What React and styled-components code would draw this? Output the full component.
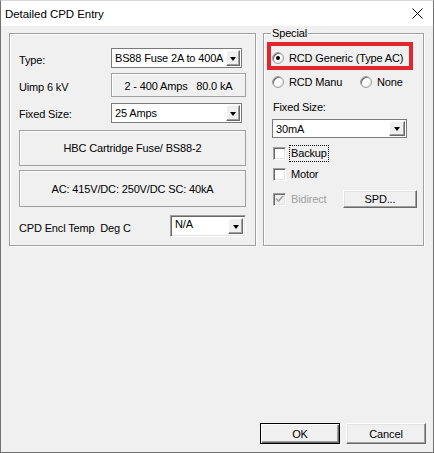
import React from "react";
import styled, { createGlobalStyle, css } from "styled-components";

const GlobalStyle = createGlobalStyle`
  html, body {
    margin: 0;
    padding: 0;
    background: #fff;
  }
  body {
    font-family: "Liberation Sans", Arial, sans-serif;
    font-size: 11px;
    letter-spacing: -0.15px;
    color: #000;
  }
  * { box-sizing: border-box; }
`;

const Window = styled.div`
  width: 434px;
  height: 453px;
  display: flex;
  flex-direction: column;
  background: #f0f0f0;
  border: 1px solid #707070;
  border-top-color: #d8d8d8;
`;

const TitleBar = styled.div`
  height: 25px;
  flex: none;
  background: #fff;
  display: flex;
  align-items: center;
  justify-content: space-between;
  padding: 0 10px 0 4px;
`;

const Title = styled.span`
  font-size: 11.5px;
  letter-spacing: -0.05px;
`;

const Body = styled.div`
  flex: 1;
  display: flex;
  flex-direction: column;
  padding: 7px 9px 8px 8px;
`;

const Groups = styled.div`
  display: flex;
  align-items: flex-start;
  gap: 7px;
`;

const GroupBox = styled.div`
  position: relative;
  width: ${p => p.w}px;
  height: 213px;
  padding: ${p => p.pad};
  border: 1px solid #a0a0a0;
  box-shadow: inset 1px 1px 0 #fff, 1px 1px 0 #fff;
  display: flex;
  flex-direction: column;
`;

const Legend = styled.span`
  position: absolute;
  top: -7px;
  left: 7px;
  padding: 0 1px;
  line-height: 13px;
  background: #f0f0f0;
`;

const Row = styled.div`
  display: flex;
  align-items: center;
  height: ${p => p.h}px;
  margin-top: ${p => p.mt || 0}px;
  margin-left: ${p => p.ml || 0}px;
`;

const Label = styled.span`
  width: ${p => (p.w ? `${p.w}px` : "auto")};
  flex: none;
  padding-top: ${p => p.dy || 0}px;
  white-space: pre;
`;

const Combo = styled.div`
  width: ${p => p.w}px;
  height: ${p => p.h}px;
  display: flex;
  align-items: ${p => (p.sunken ? "flex-start" : "center")};
  background: #fff;
  padding: 1px;
  ${p =>
    p.sunken
      ? css`
          border: 1px solid;
          border-color: #a0a0a0 #fff #fff #a0a0a0;
          box-shadow: inset 1px 1px 0 #696969, inset -1px -1px 0 #e3e3e3;
          padding: 2px;
        `
      : css`
          border: 1px solid #7a7a7a;
        `}
`;

const ComboText = styled.span`
  flex: 1;
  padding-left: 2px;
  white-space: nowrap;
  overflow: hidden;
`;

const DropButton = styled.span`
  width: ${p => p.w || 14}px;
  align-self: stretch;
  flex: none;
  background: #f0f0f0;
  border: 1px solid;
  border-color: #fff #696969 #696969 #fff;
  box-shadow: inset -1px -1px 0 #a0a0a0;
  display: flex;
  align-items: center;
  justify-content: center;

  &::after {
    content: "";
    display: block;
    margin-top: 1px;
    border-left: 3.5px solid transparent;
    border-right: 3.5px solid transparent;
    border-top: 4px solid #000;
  }
`;

const StaticBox = styled.div`
  width: ${p => p.w}px;
  height: ${p => p.h}px;
  margin-top: ${p => p.mt || 0}px;
  flex: none;
  display: flex;
  align-items: center;
  justify-content: center;
  padding-top: ${p => p.dy || 0}px;
  border: 1px solid #a0a0a0;
  box-shadow: inset 1px 1px 0 #fff;
  white-space: pre;
`;

const Highlight = styled.div`
  width: 146px;
  height: 28px;
  margin-left: -5px;
  border: 4px solid #e3262e;
  padding: 3px 0 0 1px;
  display: flex;
  align-items: center;
`;

const Option = styled.label`
  display: flex;
  align-items: center;
  width: ${p => (p.w ? `${p.w}px` : "auto")};
  color: ${p => (p.disabled ? "#a0a0a0" : "#000")};
`;

const RadioDot = styled.span`
  width: 12px;
  height: 12px;
  flex: none;
  margin-right: 5px;
  border-radius: 50%;
  background: #fff;
  border: 1px solid #a0a0a0;
  box-shadow: inset 1px 1px 0 #696969, inset -1px -1px 0 #e3e3e3;
  display: flex;
  align-items: center;
  justify-content: center;

  &::after {
    content: "";
    width: 4px;
    height: 4px;
    border-radius: 50%;
    background: ${p => (p.checked ? "#000" : "transparent")};
  }
`;

const CheckBox = styled.span`
  width: 13px;
  height: 13px;
  flex: none;
  margin: 0 5px 0 1px;
  background: ${p => (p.disabled ? "#f0f0f0" : "#fff")};
  border: 1px solid;
  border-color: #a0a0a0 #fff #fff #a0a0a0;
  box-shadow: inset 1px 1px 0 #696969, inset -1px -1px 0 #e3e3e3;
  display: flex;
  align-items: center;
  justify-content: center;
`;

const FocusText = styled.span`
  padding: 1px 1px 2px;
  border: 1px dotted #000;
  margin-left: -2px;
`;

const PushButton = styled.button`
  width: ${p => p.w}px;
  height: ${p => p.h}px;
  flex: none;
  padding: 0;
  font: inherit;
  letter-spacing: inherit;
  color: #000;
  background: #f0f0f0;
  border: 1px solid;
  border-color: #fff #696969 #696969 #fff;
  box-shadow: inset -1px -1px 0 #a0a0a0, inset 1px 1px 0 #e3e3e3;
  ${p =>
    p.isDefault &&
    css`
      border-color: #000;
      box-shadow: inset 1px 1px 0 #fff, inset -1px -1px 0 #696969,
        inset -2px -2px 0 #a0a0a0;
    `}
`;

const ButtonRow = styled.div`
  margin-top: auto;
  margin-right: -2px;
  display: flex;
  justify-content: flex-end;
  gap: 6px;
`;

const Select = ({ w, h, value, sunken, btn }) => (
  <Combo w={w} h={h} sunken={sunken}>
    <ComboText>{value}</ComboText>
    <DropButton w={btn} />
  </Combo>
);

const Radio = ({ checked, w, children }) => (
  <Option w={w}>
    <RadioDot checked={checked} />
    {children}
  </Option>
);

const Check = ({ checked, disabled, w, children }) => (
  <Option w={w} disabled={disabled}>
    <CheckBox disabled={disabled}>
      {checked && (
        <svg width="9" height="8" viewBox="0 0 9 8">
          <path d="M1 3.5 L3.5 6 L8 1" fill="none" stroke={disabled ? "#a0a0a0" : "#000"} strokeWidth="1.6" />
        </svg>
      )}
    </CheckBox>
    {children}
  </Option>
);

export default function App() {
  return (
    <>
      <GlobalStyle />
      <Window>
        <TitleBar>
          <Title>Detailed CPD Entry</Title>
          <svg width="11" height="11" viewBox="0 0 11 11">
            <path d="M0.5 0.5 L10.5 10.5 M10.5 0.5 L0.5 10.5" stroke="#000" strokeWidth="1" />
          </svg>
        </TitleBar>
        <Body>
          <Groups>
            <GroupBox w={247} pad="14px 9px 0 9px">
              <Row h={20}>
                <Label w={92} dy={4}>Type:</Label>
                <Select w={131} h={20} value="BS88 Fuse 2A to 400A" />
              </Row>
              <Row h={24} mt={5}>
                <Label w={92} dy={4}>Uimp 6 kV</Label>
                <StaticBox w={135} h={24} dy={2}>{"2 - 400 Amps   80.0 kA"}</StaticBox>
              </Row>
              <Row h={20} mt={6}>
                <Label w={92} dy={2}>Fixed Size:</Label>
                <Select w={131} h={20} value="25 Amps" />
              </Row>
              <StaticBox w={227} h={36} mt={7}>HBC Cartridge Fuse/ BS88-2</StaticBox>
              <StaticBox w={227} h={37} mt={4}>{"AC: 415V/DC: 250V/DC SC: 40kA"}</StaticBox>
              <Row h={22} mt={8}>
                <Label w={151} dy={4}>{"CPD Encl Temp  Deg C"}</Label>
                <Select w={80} h={22} value="N/A" sunken btn={15} />
              </Row>
            </GroupBox>
            <GroupBox w={161} pad="8px 0 0 8px">
              <Legend>Special</Legend>
              <Highlight>
                <Radio checked>RCD Generic (Type AC)</Radio>
              </Highlight>
              <Row h={16} mt={4}>
                <Radio w={88}>RCD Manu</Radio>
                <Radio>None</Radio>
              </Row>
              <Row h={14} mt={10} ml={1}>
                <Label>Fixed Size:</Label>
              </Row>
              <Row h={19} mt={5}>
                <Select w={135} h={19} value="30mA" btn={16} />
              </Row>
              <Row h={16} mt={7}>
                <Check>
                  <FocusText>Backup</FocusText>
                </Check>
              </Row>
              <Row h={16} mt={5}>
                <Check>Motor</Check>
              </Row>
              <Row h={18} mt={8}>
                <Check w={71} checked disabled>Bidirect</Check>
                <PushButton w={74} h={18}>SPD...</PushButton>
              </Row>
            </GroupBox>
          </Groups>
          <ButtonRow>
            <PushButton w={80} h={21} isDefault>OK</PushButton>
            <PushButton w={80} h={21}>Cancel</PushButton>
          </ButtonRow>
        </Body>
      </Window>
    </>
  );
}
